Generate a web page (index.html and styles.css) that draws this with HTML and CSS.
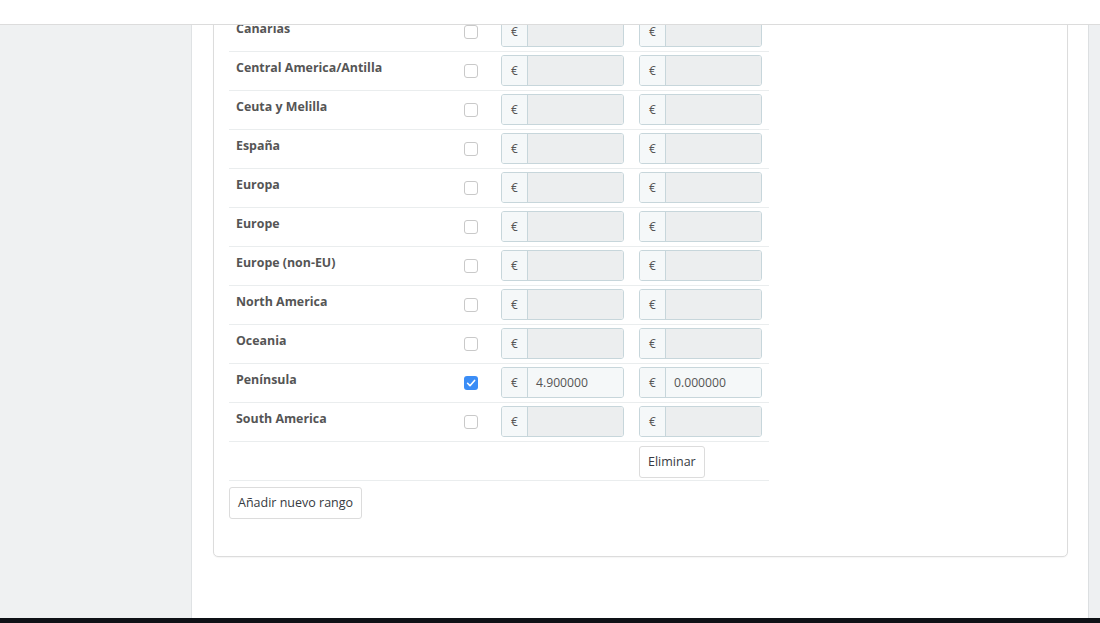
FILE: index.html
```html
<!DOCTYPE html>
<html lang="es">
<head>
<meta charset="utf-8">
<title>Rangos</title>
<link rel="stylesheet" href="styles.css">
</head>
<body>
<div class="app">
  <aside class="sidebar"></aside>
  <main class="main">
    <section class="panel">
      <div class="zones">
        <div class="row"><div class="name">Canarias</div><div class="chk"><span class="box"></span></div><div class="cell"><div class="ig"><span class="addon">€</span><span class="field off"></span></div></div><div class="cell"><div class="ig"><span class="addon">€</span><span class="field off"></span></div></div></div>
        <div class="row"><div class="name">Central America/Antilla</div><div class="chk"><span class="box"></span></div><div class="cell"><div class="ig"><span class="addon">€</span><span class="field off"></span></div></div><div class="cell"><div class="ig"><span class="addon">€</span><span class="field off"></span></div></div></div>
        <div class="row"><div class="name">Ceuta y Melilla</div><div class="chk"><span class="box"></span></div><div class="cell"><div class="ig"><span class="addon">€</span><span class="field off"></span></div></div><div class="cell"><div class="ig"><span class="addon">€</span><span class="field off"></span></div></div></div>
        <div class="row"><div class="name">España</div><div class="chk"><span class="box"></span></div><div class="cell"><div class="ig"><span class="addon">€</span><span class="field off"></span></div></div><div class="cell"><div class="ig"><span class="addon">€</span><span class="field off"></span></div></div></div>
        <div class="row"><div class="name">Europa</div><div class="chk"><span class="box"></span></div><div class="cell"><div class="ig"><span class="addon">€</span><span class="field off"></span></div></div><div class="cell"><div class="ig"><span class="addon">€</span><span class="field off"></span></div></div></div>
        <div class="row"><div class="name">Europe</div><div class="chk"><span class="box"></span></div><div class="cell"><div class="ig"><span class="addon">€</span><span class="field off"></span></div></div><div class="cell"><div class="ig"><span class="addon">€</span><span class="field off"></span></div></div></div>
        <div class="row"><div class="name">Europe (non-EU)</div><div class="chk"><span class="box"></span></div><div class="cell"><div class="ig"><span class="addon">€</span><span class="field off"></span></div></div><div class="cell"><div class="ig"><span class="addon">€</span><span class="field off"></span></div></div></div>
        <div class="row"><div class="name">North America</div><div class="chk"><span class="box"></span></div><div class="cell"><div class="ig"><span class="addon">€</span><span class="field off"></span></div></div><div class="cell"><div class="ig"><span class="addon">€</span><span class="field off"></span></div></div></div>
        <div class="row"><div class="name">Oceania</div><div class="chk"><span class="box"></span></div><div class="cell"><div class="ig"><span class="addon">€</span><span class="field off"></span></div></div><div class="cell"><div class="ig"><span class="addon">€</span><span class="field off"></span></div></div></div>
        <div class="row"><div class="name">Península</div><div class="chk"><span class="box on"><svg viewBox="0 0 14 14" width="14" height="14"><path d="M3.6 7.3 L6 9.7 L10.6 4.4" fill="none" stroke="#fff" stroke-width="1.6" stroke-linecap="round" stroke-linejoin="round"/></svg></span></div><div class="cell"><div class="ig"><span class="addon">€</span><span class="field">4.900000</span></div></div><div class="cell"><div class="ig"><span class="addon">€</span><span class="field">0.000000</span></div></div></div>
        <div class="row"><div class="name">South America</div><div class="chk"><span class="box"></span></div><div class="cell"><div class="ig"><span class="addon">€</span><span class="field off"></span></div></div><div class="cell"><div class="ig"><span class="addon">€</span><span class="field off"></span></div></div></div>
        <div class="row last"><div class="name"></div><div class="chk"></div><div class="cell"></div><div class="cell"><button class="btn" type="button">Eliminar</button></div></div>
      </div>
      <button class="btn add" type="button">Añadir nuevo rango</button>
    </section>
  </main>
  <div class="rightbar"></div>
</div>
<header class="topbar"></header>
<footer class="dock"></footer>
</body>
</html>
```

FILE: styles.css
```css
html, body {
  margin: 0;
  padding: 0;
  height: 623px;
  overflow: hidden;
  background: #fff;
  font-family: "Open Sans", "Liberation Sans", sans-serif;
  font-size: 13px;
  color: #555;
}

.app {
  display: flex;
  height: 618px;
  overflow: hidden;
}

.sidebar {
  width: 191px;
  flex: none;
  background: #eff1f2;
  border-right: 1px solid #dfe2e4;
}

.main {
  flex: 1;
  background: #fff;
  border-right: 1px solid #dcdfe1;
  padding-left: 21px;
  padding-right: 20px;
  overflow: hidden;
}

.rightbar {
  width: 11px;
  flex: none;
  background: #eef0f2;
}

.topbar {
  position: absolute;
  top: 0;
  left: 0;
  right: 0;
  height: 24px;
  background: #fff;
  border-bottom: 1px solid #dcdcdc;
}

.dock {
  height: 5px;
  background: #0e1116;
}

.panel {
  margin-top: -5px;
  border: 1px solid #dcdcdc;
  border-radius: 5px;
  padding: 16px 15px 37px 15px;
  background: #fff;
  box-shadow: 0 1px 1px rgba(0,0,0,0.04);
}

.zones {
  width: 540px;
}

.row {
  display: grid;
  grid-template-columns: 227px 37px 138px 138px;
  border-top: 1px solid #eaedee;
  height: 38px;
}

.row.last {
  border-bottom: 1px solid #eaedee;
}

.name {
  padding: 6px 0 0 7px;
  line-height: 20px;
  font-size: 12.4px;
  font-weight: 700;
  color: #555;
}

.chk {
  display: flex;
  align-items: center;
  padding-left: 8px;
  height: 31px;
  margin-top: 3px;
}

.box {
  display: block;
  width: 12px;
  height: 12px;
  border: 1px solid #c9c9c9;
  border-radius: 3px;
  background: #fff;
}

.box.on {
  width: 14px;
  height: 14px;
  border: none;
  background: #3b8df6;
}

.box.on svg {
  display: block;
}

.cell {
  padding: 3px 7px 0 8px;
}

.ig {
  display: flex;
  height: 29px;
  width: 121px;
  border: 1px solid #c7d6db;
  border-radius: 3px;
  overflow: hidden;
}

.addon {
  width: 25px;
  flex: none;
  border-right: 1px solid #c7d6db;
  background: #f5f8f9;
  text-align: center;
  line-height: 29px;
  font-size: 12px;
  color: #555;
}

.field {
  flex: 1;
  background: #f5f8f9;
  padding-left: 8px;
  line-height: 29px;
  font-size: 12.2px;
  color: #555;
}

.field.off {
  background: #eceeef;
}

.btn {
  height: 32px;
  padding: 0 8px;
  border: 1px solid #dcdcdc;
  border-radius: 3px;
  background: #fff;
  font-family: "Open Sans", "Liberation Sans", sans-serif;
  font-size: 12.5px;
  color: #363a41;
  line-height: 30px;
}

.row.last .cell {
  padding-top: 4px;
}

.add {
  margin-top: 6px;
}
```
